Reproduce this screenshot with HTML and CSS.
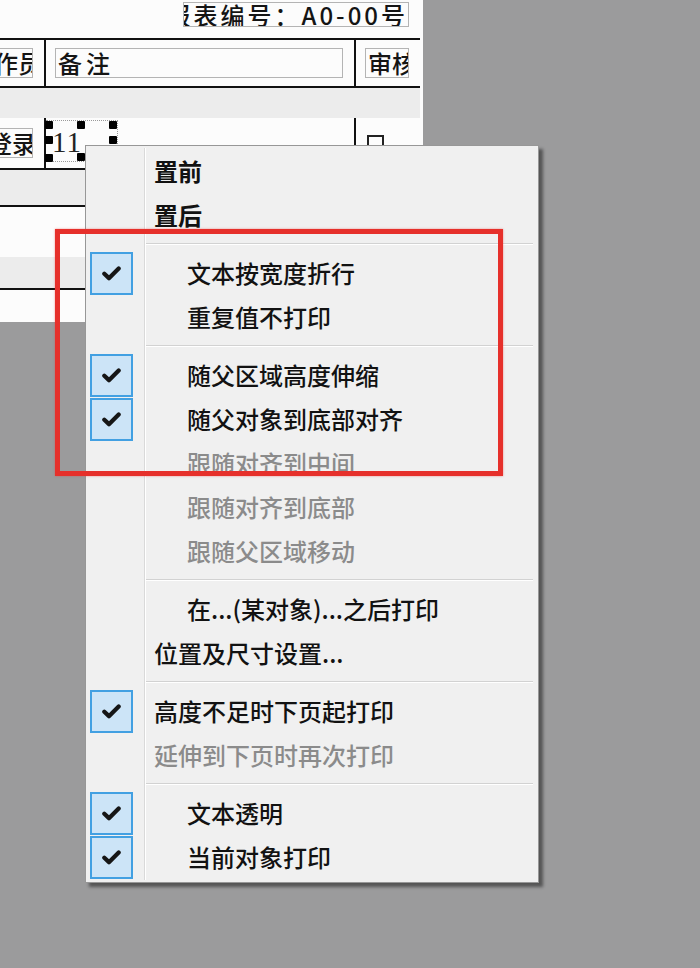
FILE: index.html
```html
<!DOCTYPE html>
<html lang="zh-CN">

<head>
    <meta charset="UTF-8">
    <meta name="viewport" content="width=device-width, initial-scale=1.0">
    <title>报表设计</title>
    <link rel="stylesheet" href="styles.css">
</head>

<body>
    <div class="sheet">
        <div class="row title-row">
            <div class="title-box"><span>报表编号：A0-00号</span></div>
        </div>
        <div class="row head-row">
            <div class="cell cut"><span class="txt shift">作员</span></div>
            <div class="vline"></div>
            <div class="cell note"><span class="txt">备注</span></div>
            <div class="vline gap"></div>
            <div class="cell audit"><span class="txt">审核</span></div>
        </div>
        <div class="band b30"></div>
        <div class="row data-row">
            <div class="cell cut"><span class="txt shift2">登录</span></div>
            <div class="vline"></div>
            <div class="sel">
                <span class="sel-text">11</span>
                <i class="h tl"></i><i class="h tm"></i><i class="h tr"></i>
                <i class="h ml"></i><i class="h mr"></i>
                <i class="h bl"></i><i class="h bm"></i>
            </div>
            <div class="vline far"></div>
            <div class="tick-box"></div>
        </div>
        <div class="band b35 lined"></div>
        <div class="blank b50"></div>
        <div class="band b31 lined"></div>
        <div class="blank b32"></div>
    </div>

    <div class="menu">
        <div class="item strong"><div class="mark"></div><span class="label">置前</span></div>
        <div class="item strong"><div class="mark"></div><span class="label">置后</span></div>
        <div class="sep"></div>
        <div class="item"><div class="mark"><div class="check"><svg viewBox="0 0 18 14"><path d="M2.2 7.2 L6.6 11.4 L15.8 2.2"/></svg></div></div><span class="label indent">文本按宽度折行</span></div>
        <div class="item"><div class="mark"></div><span class="label indent">重复值不打印</span></div>
        <div class="sep"></div>
        <div class="item"><div class="mark"><div class="check"><svg viewBox="0 0 18 14"><path d="M2.2 7.2 L6.6 11.4 L15.8 2.2"/></svg></div></div><span class="label indent">随父区域高度伸缩</span></div>
        <div class="item"><div class="mark"><div class="check"><svg viewBox="0 0 18 14"><path d="M2.2 7.2 L6.6 11.4 L15.8 2.2"/></svg></div></div><span class="label indent">随父对象到底部对齐</span></div>
        <div class="item off"><div class="mark"></div><span class="label indent">跟随对齐到中间</span></div>
        <div class="item off"><div class="mark"></div><span class="label indent">跟随对齐到底部</span></div>
        <div class="item off"><div class="mark"></div><span class="label indent">跟随父区域移动</span></div>
        <div class="sep"></div>
        <div class="item"><div class="mark"></div><span class="label indent">在...(某对象)...之后打印</span></div>
        <div class="item"><div class="mark"></div><span class="label">位置及尺寸设置...</span></div>
        <div class="sep"></div>
        <div class="item"><div class="mark"><div class="check"><svg viewBox="0 0 18 14"><path d="M2.2 7.2 L6.6 11.4 L15.8 2.2"/></svg></div></div><span class="label">高度不足时下页起打印</span></div>
        <div class="item off"><div class="mark"></div><span class="label">延伸到下页时再次打印</span></div>
        <div class="sep"></div>
        <div class="item"><div class="mark"><div class="check"><svg viewBox="0 0 18 14"><path d="M2.2 7.2 L6.6 11.4 L15.8 2.2"/></svg></div></div><span class="label indent">文本透明</span></div>
        <div class="item"><div class="mark"><div class="check"><svg viewBox="0 0 18 14"><path d="M2.2 7.2 L6.6 11.4 L15.8 2.2"/></svg></div></div><span class="label indent">当前对象打印</span></div>
    </div>

    <!-- red annotation frame -->
    <div class="hilite"></div>
</body>

</html>
```

FILE: styles.css
```css
* {
    margin: 0;
    padding: 0;
    box-sizing: border-box;
}

body {
    width: 700px;
    height: 968px;
    overflow: hidden;
    position: relative;
    background-color: #9b9b9c;
    font-family: "Noto Sans CJK SC", "Liberation Sans", sans-serif;
}

/* report canvas behind the menu */
.sheet {
    width: 423px;
    padding-right: 3px;
    background-color: #fcfcfc;
    display: flex;
    flex-direction: column;
}

.row {
    display: flex;
    border-bottom: 2px solid #111;
}

.title-row {
    height: 40px;
    padding-top: 2px;
}

.title-box {
    margin-left: 183px;
    width: 226px;
    height: 25px;
    border: 1px solid #b4b4b4;
    display: flex;
    justify-content: flex-end;
    align-items: center;
    overflow: hidden;
    white-space: nowrap;
    font-size: 24px;
    letter-spacing: 3px;
    color: #141414;
    font-weight: 500;
}

.head-row {
    height: 48px;
    align-items: center;
}

.data-row {
    height: 52px;
    align-items: flex-start;
}

.cell {
    height: 30px;
    border: 1px solid #b4b4b4;
    overflow: hidden;
    white-space: nowrap;
    display: flex;
    align-items: center;
}

.txt {
    font-size: 24px;
    font-weight: 500;
    color: #151515;
    line-height: 28px;
}

.cut {
    width: 33px;
    border-left: none;
}

.data-row .cut {
    margin-top: 10px;
}

.shift {
    margin-left: -6px;
}

.shift2 {
    margin-left: -12px;
}

.note {
    margin-left: 9px;
    width: 288px;
    padding-left: 2px;
}

.note .txt {
    letter-spacing: 4px;
}

.audit {
    margin-left: 9px;
    width: 44px;
    padding-left: 2px;
}

.vline {
    width: 2px;
    align-self: stretch;
    background-color: #111;
    margin-left: 11px;
}

.vline.gap {
    margin-left: 11px;
}

.vline.far {
    margin-left: 236px;
}

.sel {
    position: relative;
    width: 72px;
    height: 42px;
    margin-top: 2px;
    border: 1px dotted #9a9a9a;
    border-left: none;
}

.sel-text {
    position: absolute;
    left: 6px;
    top: 5px;
    font-family: "Liberation Serif", serif;
    font-size: 29px;
    line-height: 32px;
    color: #222;
    letter-spacing: 1px;
}

.h {
    position: absolute;
    width: 8px;
    height: 8px;
    background-color: #000;
    border-radius: 1px;
}

.tl { left: -1px; top: 0; }
.tm { left: 31px; top: 0; }
.tr { left: 63px; top: 0; }
.ml { left: -1px; top: 15px; }
.mr { left: 63px; top: 15px; }
.bl { left: -1px; top: 33px; }
.bm { left: 31px; top: 32px; }

.tick-box {
    margin-left: 11px;
    margin-top: 17px;
    width: 17px;
    height: 17px;
    border: 2px solid #222;
}

.band {
    background-color: #ececec;
}

.blank {
    background-color: #fcfcfc;
}

.lined {
    border-bottom: 2px solid #111;
}

.b30 { height: 30px; }
.b35 { height: 37px; }
.b50 { height: 50px; }
.b31 { height: 33px; }
.b32 { height: 32px; }

/* context menu */
.menu {
    position: absolute;
    left: 85px;
    top: 145px;
    width: 454px;
    padding: 3px 5px 3px 0;
    background-color: #f0f0f0;
    border: 1px solid #979797;
    box-shadow: 4px 4px 3px rgba(0, 0, 0, .45);
}

.menu::before {
    content: '';
    position: absolute;
    left: 58px;
    top: 2px;
    bottom: 2px;
    width: 1px;
    background-color: #d9d9d9;
    border-right: 1px solid #fff;
    box-sizing: content-box;
}

.item {
    height: 44px;
    display: flex;
    align-items: center;
    position: relative;
}

.mark {
    width: 59px;
    height: 44px;
    flex-shrink: 0;
    padding-left: 4px;
    display: flex;
    align-items: center;
}

.check {
    width: 43px;
    height: 43px;
    background-color: #cce4f7;
    border: 2px solid #42a0e2;
    display: flex;
    align-items: center;
    justify-content: center;
}

.check svg {
    width: 19px;
    height: 15px;
}

.check path {
    fill: none;
    stroke: #161616;
    stroke-width: 4;
    stroke-linecap: round;
    stroke-linejoin: round;
}

.label {
    padding-left: 9px;
    font-size: 24px;
    font-weight: 500;
    line-height: 30px;
    color: #121212;
    white-space: nowrap;
}

.label.indent {
    padding-left: 42px;
}

.strong .label {
    font-weight: 600;
}

.off .label {
    color: #8b8b8b;
}

.sep {
    margin: 6px 0 6px 59px;
    border-top: 1px solid #d2d2d2;
    border-bottom: 1px solid #fff;
}

.hilite {
    position: absolute;
    left: 55px;
    top: 229px;
    width: 448px;
    height: 247px;
    border: 5px solid #e6302b;
    box-shadow: 0 0 2px rgba(230, 48, 43, .5);
}
```
